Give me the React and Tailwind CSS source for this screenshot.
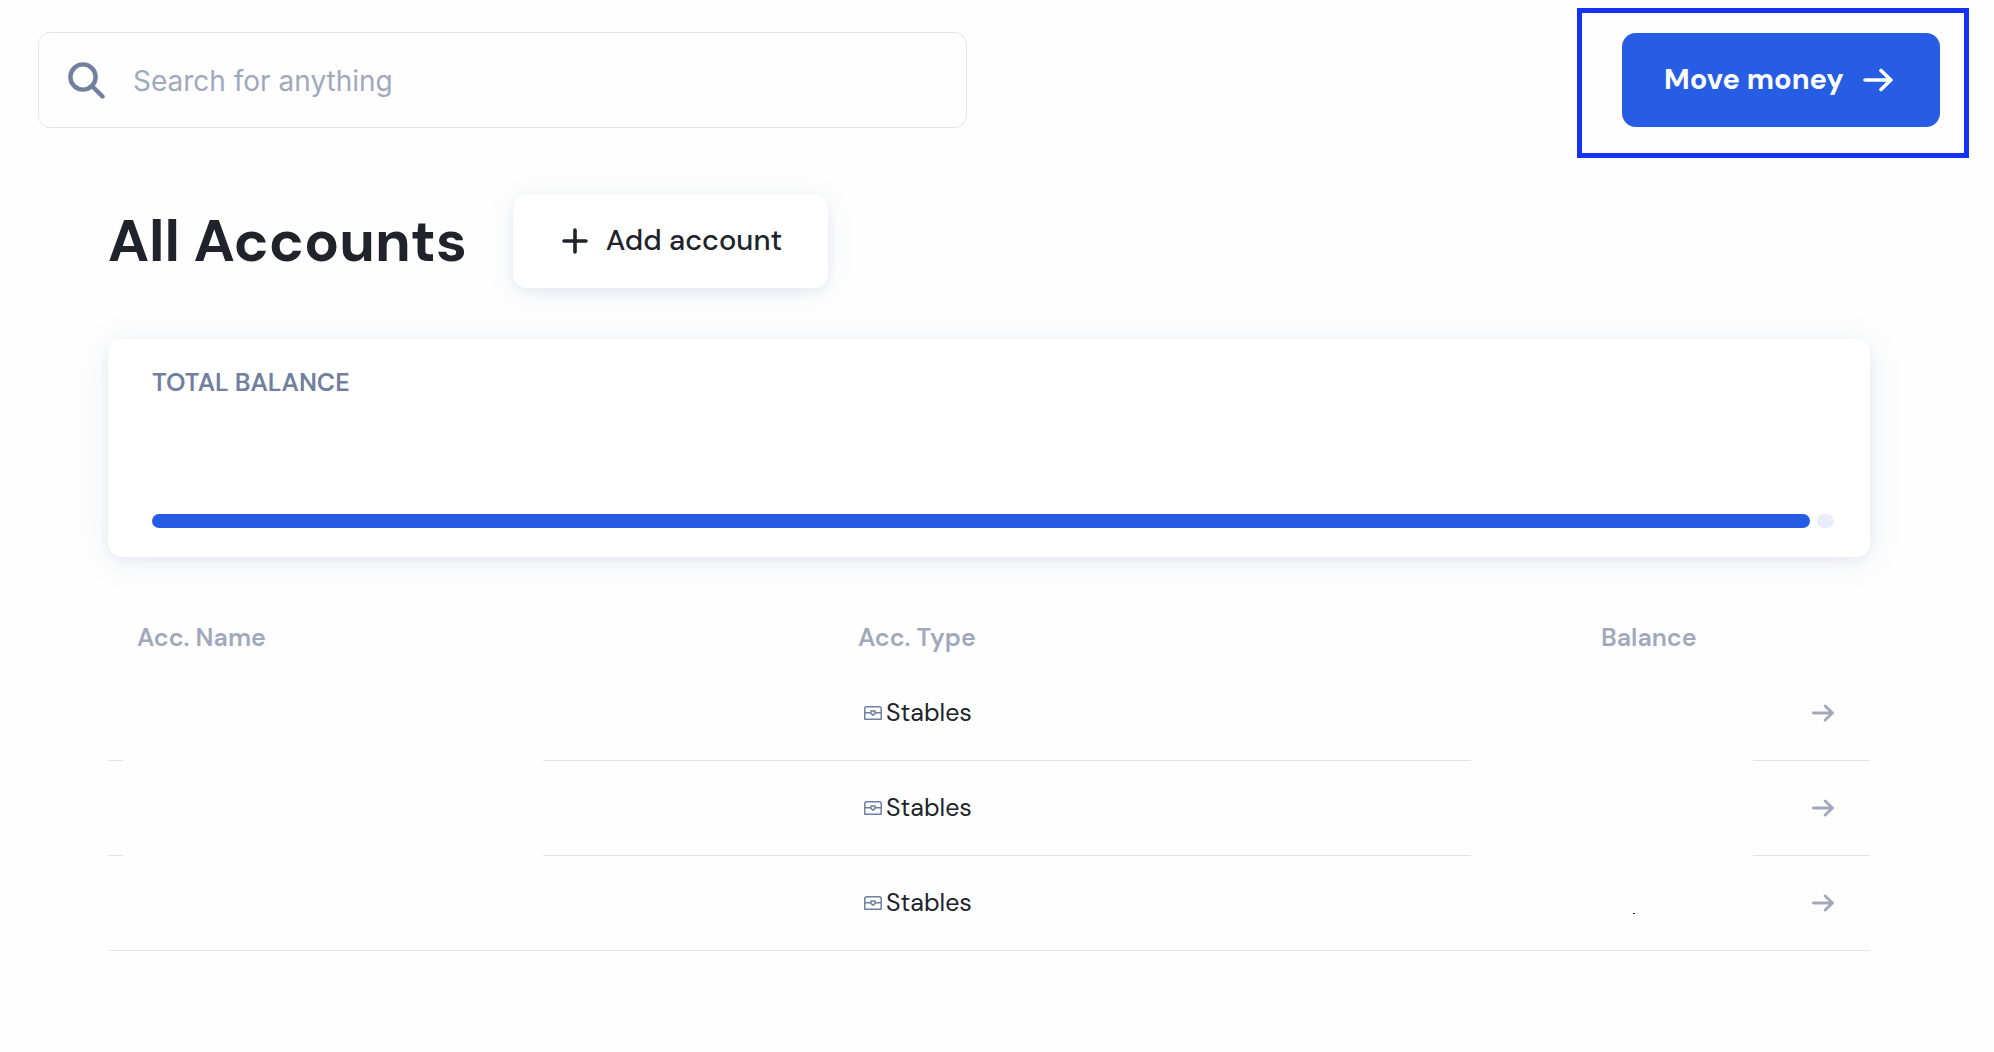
import React, { useState } from 'react';

const accounts = [
  { id: 1, type: 'Stables' },
  { id: 2, type: 'Stables' },
  { id: 3, type: 'Stables', mark: true },
];

const ArrowIcon = ({ className, strokeWidth }) => (
  <svg className={className} viewBox="0 0 30 24" fill="none" stroke="currentColor" strokeWidth={strokeWidth} strokeLinecap="round" strokeLinejoin="round" aria-hidden="true">
    <path d="M2 12h26M18 2.5l9.8 9.5-9.8 9.5" />
  </svg>
);

const ChestIcon = () => (
  <svg className="h-[14px] w-[18px] text-[#71809f]" viewBox="0 0 18 14" fill="none" stroke="currentColor" strokeWidth="1.5" strokeLinejoin="round" aria-hidden="true">
    <path d="M.8 13.2V2.6Q.8.8 2.6.8h12.8q1.8 0 1.8 1.8v10.6z" />
    <path d="M.8 6.8h6M11.2 6.8h6" />
    <path d="M6.9 5h4.2v2.4L9 9.3 6.9 7.4z" />
  </svg>
);

const App = () => {
  const [query, setQuery] = useState('');

  return (
    <div className="min-h-screen bg-[#fefefe] font-['DM_Sans',Inter,sans-serif] text-[#20232b]">
      <header className="flex items-start justify-between pt-2 pr-[25px] pl-[38px]">
        <label className="mt-6 flex h-24 w-1/2 max-w-[929px] items-center rounded-xl border border-[#e5e6e9] pl-[29px]">
          <svg className="h-[37px] w-[37px] shrink-0 text-[#71809f]" viewBox="0 0 37 37" fill="none" stroke="currentColor" strokeWidth="4.4" strokeLinecap="round" aria-hidden="true">
            <circle cx="15" cy="15" r="12.6" />
            <path d="M24.5 24.5l10 10" />
          </svg>
          <input
            type="text"
            aria-label="Search for anything"
            placeholder="Search for anything"
            value={query}
            onChange={(e) => setQuery(e.target.value)}
            className="ml-7 min-w-0 flex-1 bg-transparent pt-px font-[Inter,sans-serif] text-[28px] outline-none placeholder:text-[#a0a9bc]"
          />
        </label>

        <div className="border-[5px] border-[#1431f5] pt-5 pr-6 pb-[26px] pl-10">
          <button type="button" className="flex h-[94px] w-[318px] items-center justify-between rounded-[14px] bg-[#265de4] pr-[47px] pl-[42px] text-[29px] font-bold text-white">
            Move money
            <ArrowIcon className="h-6 w-[30px]" strokeWidth="3.6" />
          </button>
        </div>
      </header>

      <main className="pr-[124px] pl-[108px]">
        <div className="mt-9 flex items-center gap-[46px]">
          <h1 className="text-[58px] leading-[94px] font-bold">All Accounts</h1>
          <button type="button" className="flex h-[94px] w-[315px] items-center gap-[18px] rounded-[14px] bg-white pl-[49px] text-[29px] font-medium shadow-[0_4px_12px_rgba(38,60,150,0.06),0_4px_28px_rgba(38,60,120,0.08)]">
            <svg className="h-[26px] w-[26px]" viewBox="0 0 26 26" fill="none" stroke="currentColor" strokeWidth="3.6" strokeLinecap="round" aria-hidden="true">
              <path d="M13 2v22M2 13h22" />
            </svg>
            Add account
          </button>
        </div>

        <section className="mt-[51px] flex h-[218px] flex-col justify-between rounded-[14px] bg-white pt-6 pr-9 pb-[29px] pl-11 shadow-[0_4px_12px_rgba(38,60,150,0.06),0_4px_36px_rgba(38,60,120,0.08)]">
          <h2 className="text-[25px] leading-10 font-semibold text-[#71809f]">TOTAL BALANCE</h2>
          <div className="flex gap-[7px]">
            <div className="h-[14px] flex-1 rounded-full bg-[#265de4]" />
            <div className="h-[14px] w-[17px] rounded-full bg-[#e8eefb]" />
          </div>
        </section>

        <table className="mt-[52px] w-full table-fixed border-separate border-spacing-0 text-left text-[25px]">
          <thead>
            <tr className="h-[57px] text-[#a0a9bc]">
              <th className="w-[15px]" />
              <th className="w-[420px] pl-[14px] font-semibold">Acc. Name</th>
              <th className="pl-[315px] font-semibold">Acc. Type</th>
              <th className="w-[282px] pl-[130px] font-semibold">Balance</th>
              <th className="w-[117px]" />
            </tr>
          </thead>
          <tbody>
            {accounts.map(({ id, type, mark }) => (
              <tr key={id} className="h-[95px] *:border-[#e3e4e6] last:*:border-b">
                <td className="border-b" />
                <td />
                <td className="border-b pl-[321px]">
                  <span className="flex items-center gap-1">
                    <ChestIcon />
                    {type}
                  </span>
                </td>
                <td className="pl-[162px]">
                  {mark && <span className="mt-5 block h-px w-[2px] bg-[#20232b]" />}
                </td>
                <td className="border-b pr-9">
                  <a href="#account" aria-label="Open account" className="flex justify-end text-[#a0a9bc]">
                    <ArrowIcon className="h-[18px] w-[22px]" strokeWidth="4" />
                  </a>
                </td>
              </tr>
            ))}
          </tbody>
        </table>
      </main>
    </div>
  );
};

export default App;
